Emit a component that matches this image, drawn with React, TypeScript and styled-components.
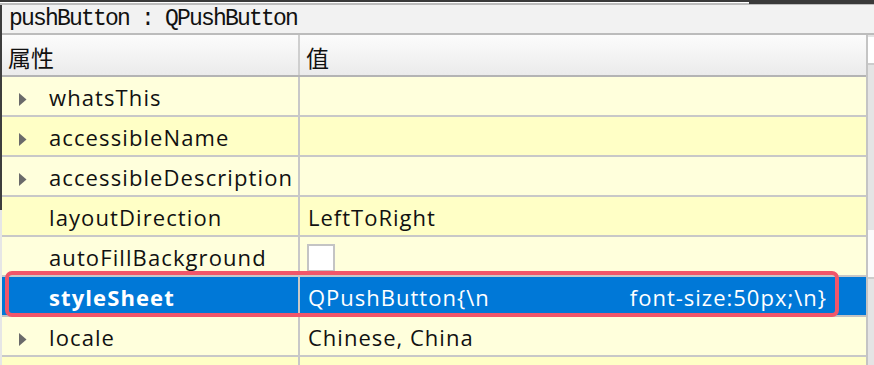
import React from "react"
import styled, { createGlobalStyle } from "styled-components"

const GlobalStyle = createGlobalStyle`
html, body {
  margin: 0;
  padding: 0;
  background: #ffffff;
}
`

const uiFont = `"Open Sans", "Noto Sans CJK SC", sans-serif`
const nameWidth = "298px"

const Frame = styled.div`
position: relative;
width: 874px;
height: 365px;
overflow: hidden;
box-sizing: border-box;
padding-left: 2px;
background: linear-gradient(to bottom, #3d3d3d 0, #3d3d3d 210px, #e6e6e6 210px);
display: flex;
flex-direction: column;
font-family: ${uiFont};
`

const TopEdge = styled.div`
display: flex;
height: 5px;
margin-left: -2px;
flex-shrink: 0;
`
const TopEdgeLeft = styled.div`
width: 749px;
box-sizing: border-box;
border-top: 2px solid #3a3a3a;
border-bottom: 2px solid #bdbdbd;
background: #ffffff;
`
const TopEdgeRight = styled.div`
flex: 1;
box-sizing: border-box;
border-top: 4px solid #3a3a3a;
border-bottom: 1px solid #bdbdbd;
`

const TitleBar = styled.div`
height: 28px;
flex-shrink: 0;
background: #f2f2f2;
border-bottom: 2px solid #bcbcbc;
padding-left: 7px;
display: flex;
align-items: center;
font-family: "Liberation Mono", monospace;
font-size: 23px;
letter-spacing: -1.8px;
color: #111;
white-space: pre;
`

const Body = styled.div`
flex: 1;
display: flex;
min-height: 0;
`

const Table = styled.div`
flex: 1;
display: flex;
flex-direction: column;
`

const HeaderRow = styled.div`
display: flex;
height: 40px;
flex-shrink: 0;
background: linear-gradient(to bottom, #fcfcfc, #ebebeb);
border-bottom: 2px solid #b4b4b4;
`
const HeaderCell = styled.div<{ first?: boolean }>`
width: ${p => (p.first ? nameWidth : "auto")};
flex: ${p => (p.first ? "none" : "1")};
box-sizing: border-box;
border-right: ${p => (p.first ? "2px solid #cfcfcf" : "none")};
padding-left: 6px;
padding-top: 3px;
display: flex;
align-items: center;
font-family: "Noto Sans CJK SC", sans-serif;
font-size: 23px;
color: #111;
`

const Row = styled.div<{ tone: "light" | "deep" | "selected" }>`
display: flex;
height: 38px;
flex-shrink: 0;
border-bottom: 2px solid ${p => (p.tone === "selected" ? "#c2c2c2" : "#c8c8c8")};
background: ${p =>
  p.tone === "selected" ? "#0078d7" : p.tone === "deep" ? "#ffffc6" : "#ffffdc"};
color: ${p => (p.tone === "selected" ? "#ffffff" : "#111111")};
`

const NameCell = styled.div<{ bold?: boolean }>`
width: ${nameWidth};
flex-shrink: 0;
box-sizing: border-box;
border-right: 2px solid #c8c8c8;
display: flex;
align-items: center;
padding-left: 17px;
padding-top: 2px;
font-size: 22px;
letter-spacing: 1.1px;
font-weight: ${p => (p.bold ? 700 : 400)};
white-space: nowrap;
overflow: hidden;
`

const Expander = styled.span`
display: inline-flex;
width: 30px;
flex-shrink: 0;
margin-top: 4px;
`

const ValueCell = styled.div`
flex: 1;
display: flex;
align-items: center;
padding-left: 8px;
padding-top: 2px;
font-size: 22px;
letter-spacing: 1px;
white-space: pre;
overflow: hidden;
`

const Indent = styled.span`
display: inline-block;
width: 140px;
`

const CheckBox = styled.div`
align-self: flex-start;
margin-top: 5px;
margin-left: -1px;
width: 28px;
height: 28px;
box-sizing: border-box;
background: #ffffff;
border: 2px solid #c4c4c4;
`

const Scrollbar = styled.div`
width: 6px;
flex-shrink: 0;
border-left: 2px solid #c4c4c4;
background: #e4e4e4;
display: flex;
flex-direction: column;
`
const ScrollButton = styled.div`
height: 26px;
margin-top: 2px;
background: #ffffff;
border-bottom: 2px solid #cccccc;
`
const ScrollThumb = styled.div`
height: 47px;
margin-top: 165px;
background: #fbfbfb;
border-bottom: 2px solid #cccccc;
`

const Highlight = styled.div`
position: absolute;
left: 5px;
top: 271px;
width: 834px;
height: 46px;
box-sizing: border-box;
border: 4px solid #f1566a;
border-radius: 7px;
pointer-events: none;
`

const Arrow: React.FC = () => (
  <svg width="8" height="13" viewBox="0 0 8 13">
    <polygon points="0,0 7.5,6.5 0,13" fill="#6a6a6a" />
  </svg>
)

type Prop = {
  name: string
  value?: React.ReactNode
  expandable?: boolean
  tone: "light" | "deep" | "selected"
}

const props: Prop[] = [
  { name: "whatsThis", expandable: true, tone: "light" },
  { name: "accessibleName", expandable: true, tone: "deep" },
  { name: "accessibleDescription", expandable: true, tone: "light" },
  { name: "layoutDirection", value: "LeftToRight", tone: "deep" },
  { name: "autoFillBackground", value: <CheckBox />, tone: "light" },
  {
    name: "styleSheet",
    value: <>QPushButton{"{\\n"}<Indent />{"font-size:50px;\\n}"}</>,
    tone: "selected",
  },
  { name: "locale", value: "Chinese, China", expandable: true, tone: "light" },
  { name: "objectName", tone: "deep" },
]

const App: React.FC = () => {
  return (
    <>
      <GlobalStyle />
      <Frame>
        <TopEdge>
          <TopEdgeLeft />
          <TopEdgeRight />
        </TopEdge>
        <TitleBar>pushButton : QPushButton</TitleBar>
        <Body>
          <Table>
            <HeaderRow>
              <HeaderCell first>属性</HeaderCell>
              <HeaderCell>值</HeaderCell>
            </HeaderRow>
            {props.map(prop => (
              <Row key={prop.name} tone={prop.tone}>
                <NameCell bold={prop.tone === "selected"}>
                  <Expander>{prop.expandable ? <Arrow /> : null}</Expander>
                  {prop.name === "objectName" ? "" : prop.name}
                </NameCell>
                <ValueCell>{prop.value}</ValueCell>
              </Row>
            ))}
          </Table>
          <Scrollbar>
            <ScrollButton />
            <ScrollThumb />
          </Scrollbar>
        </Body>
        <Highlight />
      </Frame>
    </>
  )
}

export default App
